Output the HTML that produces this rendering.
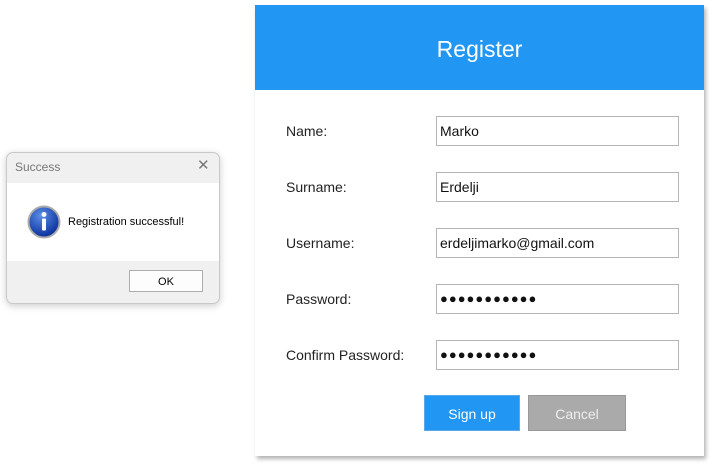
<!DOCTYPE html>
<html><head><style>
body{margin:0;width:717px;height:470px;background:#fff;position:relative;overflow:hidden;font-family:"Segoe UI","Liberation Sans",sans-serif;}
.panel{position:absolute;left:255px;top:5px;width:449px;height:451px;background:#fff;box-shadow:2px 3px 4px rgba(0,0,0,.3);}
.hdr{position:absolute;left:0;top:0;width:449px;height:85px;background:#2196f3;color:#fff;font-size:23px;text-align:center;line-height:88px;}
.lbl{position:absolute;left:31px;font-size:14px;color:#222;}
.inp{position:absolute;left:181px;width:238px;height:28px;border:1px solid #b4b4b4;font-size:14px;line-height:28px;padding-left:3px;box-sizing:content-box;color:#111;}
.dots{font-size:13px;letter-spacing:1px;}
.btn{position:absolute;top:390px;height:36px;width:96px;text-align:center;line-height:36px;font-size:14px;box-sizing:border-box;}
.dlg{position:absolute;left:6px;top:152px;width:212px;height:150px;border:1px solid #c8c8c8;border-radius:7px;background:#f0f0f0;box-shadow:0 2px 8px rgba(0,0,0,.2);overflow:hidden;font-size:11px;}
</style></head><body>
<div class="panel">
<div class="hdr">Register</div>
<div class="lbl" style="top:118px">Name:</div>
<div class="inp" style="top:111px">Marko</div>
<div class="lbl" style="top:174px">Surname:</div>
<div class="inp" style="top:167px">Erdelji</div>
<div class="lbl" style="top:230px">Username:</div>
<div class="inp" style="top:223px">erdeljimarko@gmail.com</div>
<div class="lbl" style="top:286px">Password:</div>
<div class="inp dots" style="top:279px">●●●●●●●●●●●</div>
<div class="lbl" style="top:342px">Confirm Password:</div>
<div class="inp dots" style="top:335px">●●●●●●●●●●●</div>
<div class="btn" style="left:169px;background:#2196f3;color:#fff;border:1px solid #5aa8e8;">Sign up</div>
<div class="btn" style="left:273px;background:#aaa;color:#eee;border:1px solid #999;width:98px;">Cancel</div>
</div>
<div class="dlg">
<div style="position:absolute;left:8px;top:7px;color:#777;font-size:12px;">Success</div>
<div style="position:absolute;left:190px;top:3px;color:#777;font-size:15px;">✕</div>
<div style="position:absolute;left:0;top:30px;width:213px;height:78px;background:#fff;"></div>
<svg style="position:absolute;left:20px;top:52px" width="34" height="34" viewBox="0 0 34 34"><defs><radialGradient id="g" cx="40%" cy="30%" r="70%"><stop offset="0" stop-color="#5b8ee8"/><stop offset="1" stop-color="#0a2f9a"/></radialGradient></defs><circle cx="17" cy="17" r="15.5" fill="url(#g)" stroke="#aaa" stroke-width="2"/><circle cx="17" cy="9.5" r="2.5" fill="#fff"/><rect x="15" y="13.5" width="4" height="12" rx="1" fill="#fff"/></svg>
<div style="position:absolute;left:61px;top:63px;color:#000;">Registration successful!</div>
<div style="position:absolute;left:122px;top:117px;width:74px;height:22px;border:1px solid #adadad;background:#fdfdfd;text-align:center;line-height:22px;box-sizing:border-box;">OK</div>
</div>
</body></html>
